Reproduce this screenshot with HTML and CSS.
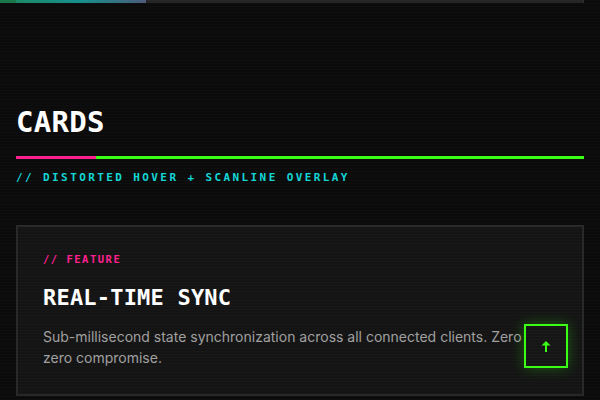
FILE: index.html
```html
<!DOCTYPE html>
<html lang="en">
<head>
  <meta charset="UTF-8" />
  <meta name="viewport" content="width=device-width, initial-scale=1.0"/>
  <title>Cards</title>
  <link rel="stylesheet" href="styles.css">
</head>
<body>
  <div class="scanlines"></div>
  <div class="progress">
    <div class="progress-fill"></div>
  </div>

  <section class="section">
    <h2 class="section-title">CARDS</h2>
    <div class="rule"><span class="rule-accent"></span></div>
    <p class="section-sub">// DISTORTED HOVER + SCANLINE OVERLAY</p>

    <div class="card">
      <div class="card-tag">// FEATURE</div>
      <h3 class="card-title">REAL-TIME SYNC</h3>
      <p class="card-text">Sub-millisecond state synchronization across all connected clients. Zero zero compromise.</p>
      <button class="card-btn" aria-label="Up">
        <svg width="10" height="11" viewBox="0 0 10 11">
          <polygon points="5,0 9.5,4.5 0.5,4.5" fill="#39ff14"/>
          <rect x="4" y="3" width="2" height="8" fill="#39ff14"/>
        </svg>
      </button>
    </div>
  </section>
</body>
</html>
```

FILE: styles.css
```css
html, body {
  margin: 0;
  background-color: #0b0b0b;
  overflow: hidden;
}
body {
  font-family: "Inter", "Liberation Sans", sans-serif;
  color: #fff;
}
.scanlines {
  position: fixed;
  inset: 0;
  pointer-events: none;
  background: repeating-linear-gradient(0deg, rgba(255,255,255,0.018) 0 1px, transparent 1px 3px);
  z-index: 5;
}
.progress {
  height: 3px;
  width: 584px;
  background: #242424;
  border-right: 1px solid #2e2e2e;
  box-sizing: border-box;
}
.progress-fill {
  width: 146px;
  height: 100%;
  background: linear-gradient(90deg, #18784a 0 16px, #1a8a66 16px, #148f8c 55%, #4c5b7c 100%);
}
.section {
  padding: 0 16px;
}
.section-title {
  font-family: "DejaVu Sans Mono", monospace;
  font-weight: bold;
  font-size: 29px;
  line-height: 36px;
  margin: 101px 0 0 0;
  letter-spacing: 0.3px;
}
.rule {
  height: 3px;
  background: #39ff14;
  margin-top: 16px;
}
.rule-accent {
  display: block;
  width: 80px;
  height: 3px;
  background: #ff1f8f;
}
.section-sub {
  font-family: "DejaVu Sans Mono", monospace;
  font-weight: bold;
  font-size: 11px;
  letter-spacing: 2.4px;
  color: #12d6d6;
  margin: 12px 0 0 0;
}
.card {
  position: relative;
  margin-top: 41px;
  background: #141414;
  border: 2px solid #282828;
  padding: 26px 24px 26px 25px;
}
.card-tag {
  font-family: "DejaVu Sans Mono", monospace;
  font-weight: bold;
  font-size: 10.5px;
  letter-spacing: 1.5px;
  color: #ff1f8f;
}
.card-title {
  font-family: "DejaVu Sans Mono", monospace;
  font-weight: bold;
  font-size: 22px;
  letter-spacing: 0.2px;
  margin: 19px 0 0 0;
  line-height: 28px;
}
.card-text {
  font-size: 14px;
  line-height: 21px;
  color: #a0a0a0;
  margin: 14px 0 0 0;
  max-width: 480px;
}
.card-btn {
  position: absolute;
  right: 14px;
  bottom: 26px;
  width: 44px;
  height: 44px;
  background: #161616;
  border: 2px solid #39ff14;
  box-shadow: 0 0 14px rgba(57,255,20,0.3);
  display: flex;
  align-items: center;
  justify-content: center;
  padding: 0;
}
```
